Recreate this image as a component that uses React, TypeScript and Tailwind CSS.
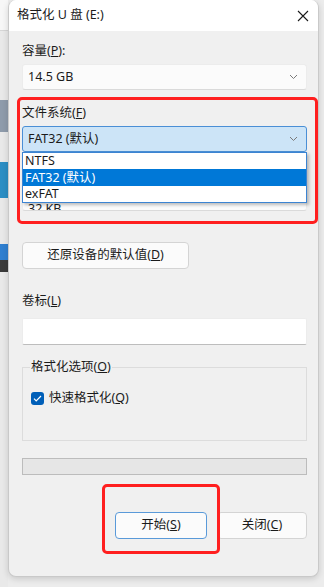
const font = { fontFamily: '"Noto Sans", "Noto Sans CJK SC", sans-serif' };

function Chevron() {
  return (
    <svg width="9" height="6" viewBox="0 0 9 6" className="shrink-0">
      <path d="M1 1l3.5 3.5L8 1" fill="none" stroke="#7a7a7a" strokeWidth="1" />
    </svg>
  );
}

function Combo({ text, active }: { text: string; active?: boolean }) {
  return (
    <div
      className={
        "h-[26px] flex items-center justify-between pl-[5px] pr-[8px] rounded-[3px] border " +
        (active
          ? "bg-[#cce4f7] border-[#4a8fd6]"
          : "bg-[#fbfbfb] border-[#ececec] border-b-[#dadada]")
      }
    >
      <span className="text-[12.5px] text-[#1b1b1b]">{text}</span>
      <Chevron />
    </div>
  );
}

function Label({ children, className = "" }: { children?: React.ReactNode; className?: string }) {
  return <div className={"h-[16px] leading-[16px] text-[12.5px] text-[#1b1b1b] " + className}>{children}</div>;
}

export default function App() {
  return (
    <div className="w-[324px] h-[587px] bg-[#ececec] flex overflow-hidden relative" style={font}>
      {/* desktop behind, left strip */}
      <div className="w-[8px] shrink-0 flex flex-col bg-[#e9e9e9]">
        <div className="h-[30px] bg-[#f7f7f7]" />
        <div className="h-[70px] border-t border-[#d6d6d6]" />
        <div className="h-[32px] bg-[#8e9bab]" />
        <div className="h-[30px]" />
        <div className="h-[36px] bg-[#2c8ec4]" />
        <div className="h-[46px]" />
        <div className="h-[16px] bg-[#2f7fd0]" />
        <div className="h-[12px] bg-[#3a3a3a]" />
        <div className="flex-1" />
      </div>

      {/* window */}
      <div className="w-[311px] h-[577px] shrink-0 flex flex-col bg-[#f0f0f0] rounded-b-[8px] rounded-t-[8px] border border-[#c9c9c9] border-t-0 shadow-[0_2px_6px_rgba(0,0,0,0.15)] relative overflow-hidden">
        <div className="h-[31px] shrink-0 bg-white flex items-center justify-between pl-[8px] pr-[9px]">
          <span className="text-[12.5px] text-[#1b1b1b]">格式化 U 盘 (E:)</span>
          <svg width="12" height="12" viewBox="0 0 12 12">
            <path d="M1 1l10 10M11 1L1 11" stroke="#1b1b1b" strokeWidth="1.1" />
          </svg>
        </div>

        <div className="flex flex-col pl-[13px] pr-[11px] relative">
          <Label className="mt-[12px]">
            容量(<span className="underline">P</span>):
          </Label>
          <div className="mt-[5px]">
            <Combo text="14.5 GB" />
          </div>

          <Label className="mt-[15px]">
            文件系统(<span className="underline">F</span>)
          </Label>
          <div className="mt-[5px] relative">
            <Combo text="FAT32 (默认)" active />
            <div className="absolute left-0 right-0 top-[26px] z-10 bg-white border border-[#3c84d2] shadow-[2px_2px_3px_rgba(0,0,0,0.25)] text-[12.5px]">
              <div className="h-[16px] leading-[16px] pl-[2px] text-[#1b1b1b]">NTFS</div>
              <div className="h-[17px] leading-[17px] pl-[2px] bg-[#0078d7] text-white">FAT32 (默认)</div>
              <div className="h-[16px] leading-[16px] pl-[2px] text-[#1b1b1b]">exFAT</div>
            </div>
          </div>

          {/* allocation size row, hidden behind the open list */}
          <Label className="mt-[12px]" />
          <div className="mt-[5px] h-[26px] flex items-end pl-[5px] rounded-[3px] border border-[#ececec] border-b-[#dadada] bg-[#fbfbfb] overflow-hidden">
            <span className="text-[12.5px] leading-[14px] mb-[-6px] text-[#1b1b1b]">32 KB</span>
          </div>

          <button className="mt-[31px] w-[167px] h-[27px] bg-[#fbfbfb] border border-[#d4d4d4] rounded-[4px] text-[12.5px] text-[#1b1b1b]">
            还原设备的默认值(<span className="underline">D</span>)
          </button>

          <Label className="mt-[24px]">
            卷标(<span className="underline">L</span>)
          </Label>
          <div className="mt-[9px] h-[27px] bg-white border border-[#ececec] border-b-[#bdbdbd] rounded-[2px]" />

          <div className="mt-[22px] h-[74px] border border-[#dcdcdc] relative">
            <div className="absolute left-[7px] top-[-9px] bg-[#f0f0f0] px-[1px] h-[16px] leading-[16px] text-[12.5px] text-[#1b1b1b]">
              格式化选项(<span className="underline">O</span>)
            </div>
            <div className="mt-[22px] ml-[8px] flex items-center gap-[5px]">
              <div className="w-[13px] h-[13px] rounded-[3px] bg-[#005fb8] flex items-center justify-center">
                <svg width="9" height="7" viewBox="0 0 9 7">
                  <path d="M1 3.6l2.2 2.2L8 1" fill="none" stroke="white" strokeWidth="1.2" />
                </svg>
              </div>
              <span className="text-[12.5px] leading-[16px] text-[#1b1b1b]">
                快速格式化(<span className="underline">Q</span>)
              </span>
            </div>
          </div>

          <div className="mt-[17px] h-[17px] bg-[#e6e6e6] border border-[#bcbcbc]" />

          <div className="mt-[37px] flex justify-end gap-[10px]">
            <button className="w-[92px] h-[27px] bg-[#fbfbfb] border border-[#5a9ad9] rounded-[4px] text-[12.5px] text-[#1b1b1b]">
              开始(<span className="underline">S</span>)
            </button>
            <button className="w-[90px] h-[27px] bg-[#fbfbfb] border border-[#d4d4d4] rounded-[4px] text-[12.5px] text-[#1b1b1b]">
              关闭(<span className="underline">C</span>)
            </button>
          </div>
        </div>
      </div>

      <div className="flex-1 bg-[#ececec]" />

      {/* annotation rectangles */}
      <div className="absolute left-[17px] top-[97px] w-[301px] h-[127px] border-[3px] border-[#ff1f1f] rounded-[5px] z-20 pointer-events-none" />
      <div className="absolute left-[102px] top-[484px] w-[118px] h-[70px] border-[3px] border-[#ff1f1f] rounded-[5px] z-20 pointer-events-none" />
    </div>
  );
}
